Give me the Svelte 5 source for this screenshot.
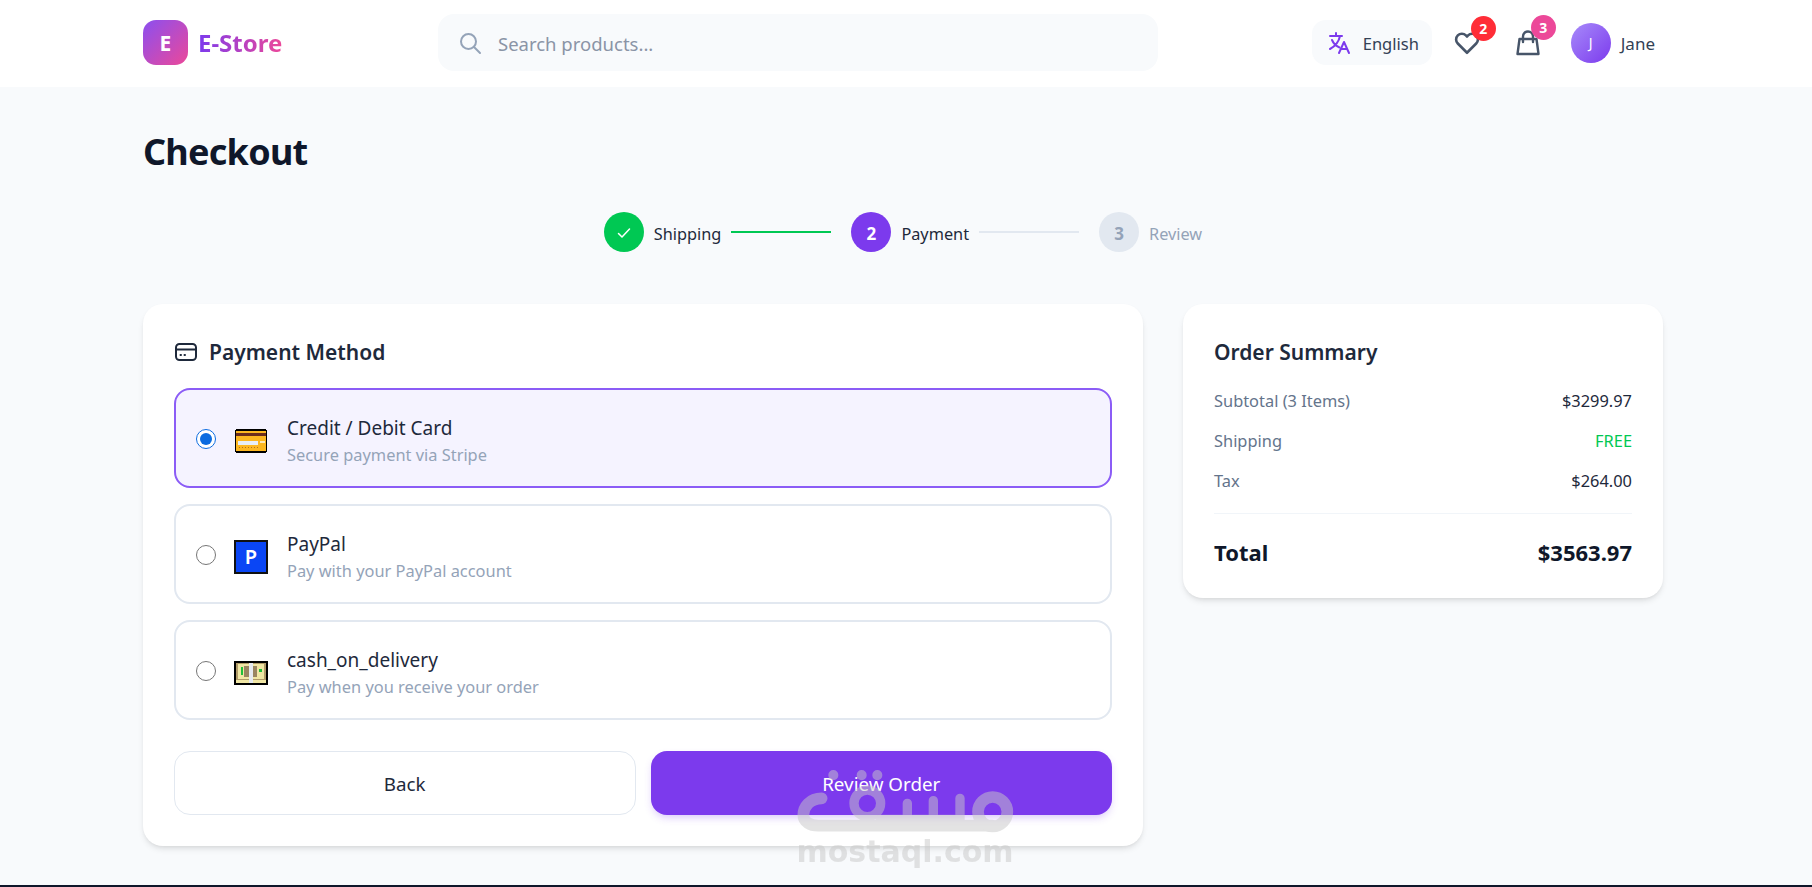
<script>
  const methods = [
    { id: 'card', title: 'Credit / Debit Card', sub: 'Secure payment via Stripe' },
    { id: 'paypal', title: 'PayPal', sub: 'Pay with your PayPal account' },
    { id: 'cod', title: 'cash_on_delivery', sub: 'Pay when you receive your order' }
  ]
  let selected = $state('card')
</script>

<div class="page">
  <header class="topbar">
    <div class="logo">
      <span class="logo-mark">E</span>
      <span class="logo-text">E-Store</span>
    </div>
    <div class="search">
      <svg width="24" height="24" viewBox="0 0 24 24" fill="none" stroke="#94a3b8" stroke-width="2" stroke-linecap="round"><circle cx="10.5" cy="10.5" r="7.5"/><path d="M16 16l6 6"/></svg>
      <span>Search products...</span>
    </div>
    <div class="actions">
      <div class="lang">
        <svg width="24" height="24" viewBox="0 0 24 24" fill="none" stroke="#7c3aed" stroke-width="2" stroke-linecap="round" stroke-linejoin="round"><path d="M3 5h12M9 2v3M5 9c1.5 3.5 4 6 7.5 7.5M13 5c-1 5-4.500 10-10 13"/><path d="M12 22l5-11 5 11M14 18h6"/></svg>
        <span>English</span>
      </div>
      <div class="icon-btn heart">
        <svg width="26" height="24" viewBox="0 0 24 22" fill="none" stroke="#475569" stroke-width="2.400" stroke-linejoin="round"><path d="M12 20L3.500 11.500a5.300 5.300 0 0 1 7.500-7.500l1 1 1-1a5.300 5.300 0 0 1 7.500 7.500z"/></svg>
        <span class="badge red">2</span>
      </div>
      <div class="icon-btn bag">
        <svg width="24" height="26" viewBox="0 0 24 26" fill="none" stroke="#475569" stroke-width="2.400" stroke-linejoin="round" stroke-linecap="round"><path d="M3.500 9h17l2 15h-21z"/><path d="M7 12V6.500a5 5 0 0 1 10 0V12"/></svg>
        <span class="badge pink">3</span>
      </div>
      <div class="user">
        <span class="avatar">J</span>
        <span class="user-name">Jane</span>
      </div>
    </div>
  </header>

  <main class="content">
    <h1>Checkout</h1>

    <div class="stepper">
      <span class="dot done">
        <svg width="16" height="16" viewBox="0 0 16 16" fill="none" stroke="#fff" stroke-width="1.500" stroke-linecap="round" stroke-linejoin="round"><path d="M2.500 8.500l3.500 3.500 7.500-8"/></svg>
      </span>
      <span class="label">Shipping</span>
      <span class="line green"></span>
      <span class="dot active">2</span>
      <span class="label">Payment</span>
      <span class="line"></span>
      <span class="dot todo">3</span>
      <span class="label muted">Review</span>
    </div>

    <div class="columns">
      <section class="card">
        <h2 class="with-icon">
          <svg width="22" height="20" viewBox="0 0 22 20" fill="none" stroke="#1e293b" stroke-width="2" stroke-linecap="round"><rect x="1" y="2" width="20" height="16" rx="3.500"/><path d="M1 7.500h20"/><path d="M5.500 13h.5M9.500 13h.5"/></svg>
          Payment Method
        </h2>

        <div class="methods">
          {#each methods as m}
            <label class="method" class:on={selected === m.id}>
              <input type="radio" name="pay" value={m.id} bind:group={selected} />
              <span class="emoji">
                {#if m.id === 'card'}
                  <svg width="34" height="24" viewBox="0 0 34 24" shape-rendering="crispEdges"><rect x="1" y="0" width="32" height="24" rx="3" fill="#000"/><rect x="2" y="2" width="30" height="20" rx="1" fill="#fcb720"/><rect x="2" y="4" width="30" height="3" fill="#6b2c1c"/><rect x="4" y="12" width="20" height="4" fill="#e8eef5"/><rect x="26" y="12" width="5" height="2" fill="#fde8b8"/><path d="M5 18h1v1H5zM8 18h1v1H8zM11 18h1v1h-1zM14 18h1v1h-1zM17 18h1v1h-1zM20 18h1v1h-1zM23 18h1v1h-1z" fill="#b5701a"/></svg>
                {:else if m.id === 'paypal'}
                  <span class="pp">P</span>
                {:else}
                  <svg width="34" height="24" viewBox="0 0 34 24" shape-rendering="crispEdges"><rect width="34" height="24" fill="#000"/><rect x="2" y="2" width="30" height="17" fill="#b09a68"/><rect x="4" y="3" width="11" height="15" fill="#f0e6a4"/><rect x="19" y="3" width="11" height="15" fill="#f0e6a4"/><rect x="10" y="5" width="5" height="11" fill="#9a8560"/><rect x="19" y="5" width="4" height="11" fill="#9a8560"/><rect x="7" y="6" width="2" height="8" fill="#1fbf3a"/><rect x="25" y="8" width="3" height="3" fill="#1fbf3a"/><rect x="2" y="19" width="30" height="3" fill="#f0e6a4"/><rect x="15" y="2" width="4" height="20" fill="#e6eaf0"/></svg>
                {/if}
              </span>
              <span class="method-text">
                <span class="method-title">{m.title}</span>
                <span class="method-sub">{m.sub}</span>
              </span>
            </label>
          {/each}
        </div>

        <div class="buttons">
          <button class="btn back">Back</button>
          <button class="btn primary">Review Order</button>
        </div>
      </section>

      <aside class="card summary">
        <h2>Order Summary</h2>
        <div class="row"><span>Subtotal (3 Items)</span><b>$3299.97</b></div>
        <div class="row"><span>Shipping</span><b class="free">FREE</b></div>
        <div class="row"><span>Tax</span><b>$264.00</b></div>
        <div class="total"><span>Total</span><span>$3563.97</span></div>
      </aside>
    </div>
  </main>

  <div class="watermark">
    <svg width="230" height="78" viewBox="0 0 690 234" fill="none" stroke="#c8c8c8" stroke-linecap="round">
      <path stroke-width="35" d="M95 115c-35 0-55 25-55 50 0 20 20 32 45 32h523"/>
      <circle stroke-width="35" cx="608" cy="155" r="44"/>
      <circle stroke-width="28" cx="232" cy="130" r="40"/>
      <path stroke-width="28" d="M270 178h240M352 130v50M430 122v58M510 115v65"/>
      <path stroke-width="30" d="M130 45v.5M215 45v.5M262 45v.5"/>
    </svg>
    <span>mostaql.com</span>
  </div>

  <div class="edge"></div>
</div>

<style>
  :global(body) {
    margin: 0;
    background: #f8fafc;
    font-family: 'Noto Sans', 'Open Sans', sans-serif;
    color: #0f172a;
  }
  .page {
    position: relative;
    height: 887px;
    overflow: hidden;
    display: flex;
    flex-direction: column;
  }
  .topbar {
    height: 87px;
    flex: none;
    box-sizing: border-box;
    background: #fff;
    padding: 0 157px 2px 143px;
    display: flex;
    align-items: center;
  }
  .logo {
    display: flex;
    align-items: center;
    gap: 10px;
    width: 295px;
  }
  .logo-mark {
    width: 45px;
    height: 45px;
    border-radius: 13px;
    background: linear-gradient(135deg, #8b4ff0, #ec4899);
    color: #fff;
    font-weight: 700;
    font-size: 21px;
    display: flex;
    align-items: center;
    justify-content: center;
  }
  .logo-text {
    font-size: 24px;
    font-weight: 700;
    background: linear-gradient(90deg, #7c3aed, #ec4899);
    -webkit-background-clip: text;
    background-clip: text;
    color: transparent;
  }
  .search {
    width: 720px;
    height: 57px;
    box-sizing: border-box;
    background: #f8fafc;
    border-radius: 16px;
    padding-left: 20px;
    display: flex;
    align-items: center;
    gap: 16px;
    font-size: 18.5px;
    color: #8a94a6;
  }
  .search span,
  .lang span,
  .user-name {
    padding-top: 2px;
  }
  .actions {
    margin-left: auto;
    display: flex;
    align-items: center;
  }
  .lang {
    width: 120px;
    height: 45px;
    box-sizing: border-box;
    background: #f8fafc;
    border-radius: 14px;
    padding-left: 15px;
    display: flex;
    align-items: center;
    gap: 12px;
    font-size: 16.5px;
    color: #334155;
  }
  .icon-btn {
    position: relative;
    display: flex;
    margin-left: 22px;
  }
  .bag {
    margin-left: 36px;
  }
  .badge {
    position: absolute;
    top: -15px;
    left: 15px;
    width: 25px;
    height: 25px;
    border-radius: 50%;
    color: #fff;
    font-size: 14px;
    font-weight: 700;
    display: flex;
    align-items: center;
    justify-content: center;
  }
  .red { background: #ff2d37; left: 17px; }
  .pink { background: #ec4899; }
  .user {
    display: flex;
    align-items: center;
    gap: 10px;
    margin-left: 31px;
    font-size: 17px;
    color: #334155;
  }
  .avatar {
    width: 40px;
    height: 40px;
    border-radius: 50%;
    background: linear-gradient(135deg, #a78bfa, #7c3aed);
    color: #fff;
    font-size: 14px;
    display: flex;
    align-items: center;
    justify-content: center;
  }
  .content {
    padding: 0 149px 0 143px;
  }
  h1 {
    margin: 41px 0 0;
    font-size: 36px;
    line-height: 48px;
    font-weight: 700;
    letter-spacing: -0.75px;
  }
  .stepper {
    margin-top: 36px;
    height: 40px;
    display: flex;
    align-items: center;
    justify-content: center;
  }
  .dot {
    width: 40px;
    height: 40px;
    box-sizing: border-box;
    padding-top: 2px;
    border-radius: 50%;
    font-size: 17px;
    font-weight: 700;
    display: flex;
    align-items: center;
    justify-content: center;
    margin-right: 10px;
  }
  .done { background: #00c853; }
  .active { background: #7c3aed; color: #fff; }
  .todo { background: #e2e8f0; color: #94a3b8; }
  .label {
    font-size: 16.3px;
    padding-top: 3px;
    color: #1e293b;
  }
  .muted { color: #94a3b8; }
  .line {
    width: 100px;
    height: 2px;
    background: #e2e8f0;
    margin: 0 20px 0 10px;
  }
  .green { background: #00c853; }
  .columns {
    margin-top: 52px;
    display: grid;
    grid-template-columns: 1000px 480px;
    gap: 40px;
    align-items: start;
  }
  .card {
    background: #fff;
    border-radius: 20px;
    padding: 31px;
    box-shadow: 0 4px 6px -1px rgba(0,0,0,0.1), 0 2px 4px -2px rgba(0,0,0,0.08);
  }
  h2 {
    margin: 0;
    font-size: 21px;
    line-height: 34px;
    font-weight: 600;
    color: #1e293b;
  }
  .with-icon {
    display: flex;
    align-items: center;
    gap: 12px;
    padding-left: 1px;
  }
  .methods {
    margin-top: 19px;
    display: flex;
    flex-direction: column;
    gap: 16px;
  }
  .method {
    height: 100px;
    box-sizing: border-box;
    border: 2px solid #e2e8f0;
    border-radius: 16px;
    padding-left: 20px;
    display: flex;
    align-items: center;
  }
  .method.on {
    border-color: #8b5cf6;
    background: #f5f3ff;
  }
  input[type='radio'] {
    width: 20px;
    height: 20px;
    margin: 2px 0 0;
    accent-color: #0b6be0;
  }
  .emoji {
    width: 34px;
    height: 34px;
    margin: 5px 0 0 18px;
    display: flex;
    align-items: center;
    justify-content: center;
  }
  .pp {
    width: 34px;
    height: 34px;
    box-sizing: border-box;
    background: #0a46f5;
    border: 2px solid #111;
    color: #fff;
    font-size: 20px;
    font-weight: 600;
    display: flex;
    align-items: center;
    justify-content: center;
  }
  .method-text {
    margin-left: 19px;
    padding-top: 5px;
    display: flex;
    flex-direction: column;
  }
  .method-title {
    font-size: 19px;
    line-height: 29px;
    color: #1e293b;
  }
  .method-sub {
    font-size: 16.4px;
    line-height: 24px;
    color: #94a3b8;
  }
  .buttons {
    margin-top: 31px;
    display: grid;
    grid-template-columns: 1fr 1fr;
    gap: 15px;
  }
  .btn {
    height: 64px;
    padding-top: 3px;
    border-radius: 16px;
    font: 18.8px 'Noto Sans', 'Open Sans', sans-serif;
  }
  .back {
    background: #fff;
    border: 1px solid #e2e8f0;
    color: #1e293b;
  }
  .primary {
    background: #7c3aed;
    border: 0;
    color: #fff;
    box-shadow: 0 4px 8px -2px rgba(124,58,237,0.3);
  }
  .summary {
    padding-bottom: 30px;
  }
  .row {
    display: flex;
    justify-content: space-between;
    font-size: 16.4px;
    line-height: 24px;
    margin-top: 16px;
    color: #64748b;
  }
  .row b {
    font-weight: 400;
    color: #1e293b;
  }
  .row b.free { color: #00c853; }
  h2 + .row { margin-top: 20px; }
  .total {
    margin-top: 20px;
    border-top: 1px solid #f1f5f9;
    padding-top: 22px;
    display: flex;
    justify-content: space-between;
    font-size: 22px;
    line-height: 32px;
    font-weight: 700;
    color: #0f172a;
  }
  .watermark {
    position: absolute;
    left: 790px;
    top: 760px;
    width: 230px;
    opacity: 0.5;
    display: flex;
    flex-direction: column;
    align-items: center;
    pointer-events: none;
  }
  .watermark svg {
    display: block;
  }
  .watermark span {
    margin-top: -3px;
    font-family: 'DejaVu Sans', sans-serif;
    font-weight: 700;
    font-size: 30px;
    line-height: 34px;
    color: #c8c8c8;
  }
  .edge {
    position: absolute;
    left: 0;
    right: 0;
    bottom: 0;
    height: 2px;
    background: #0f172a;
  }
</style>
